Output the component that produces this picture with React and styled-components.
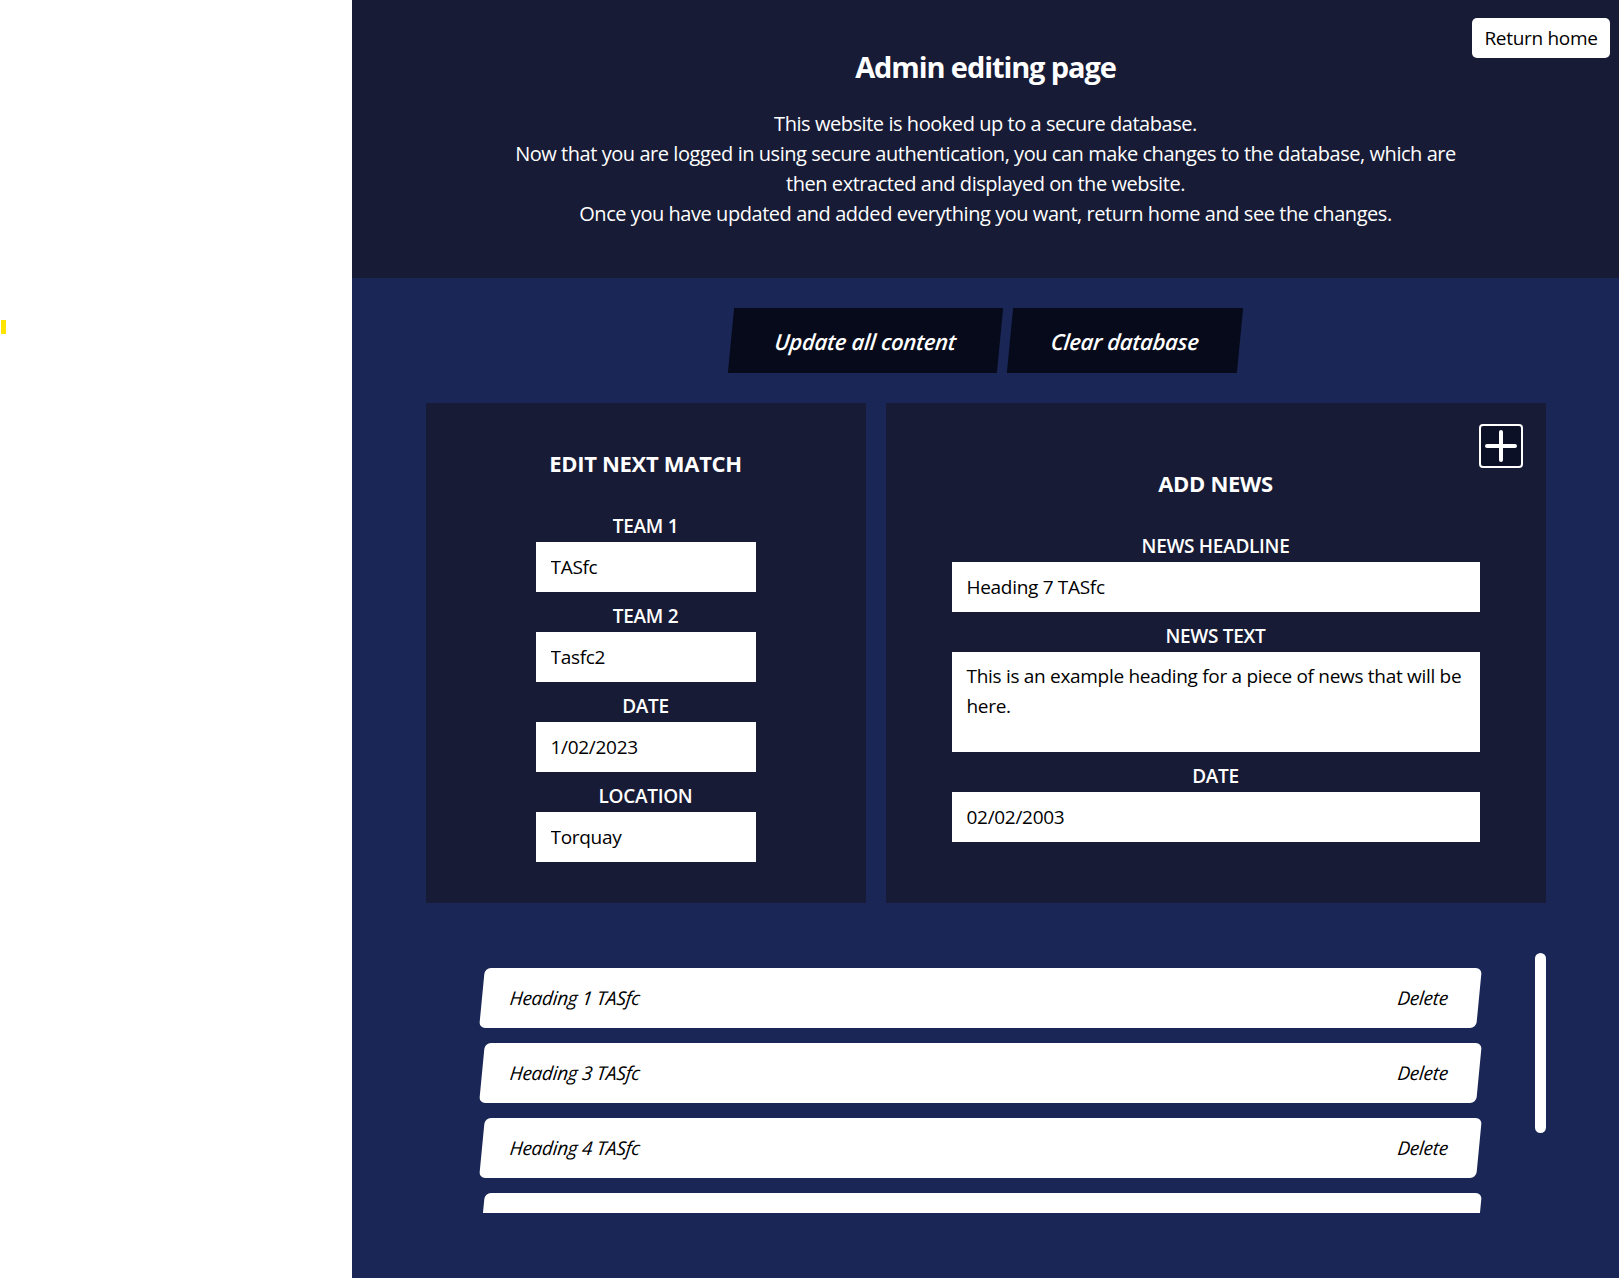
import React from 'react';
import styled, { createGlobalStyle } from 'styled-components';

const GlobalStyle = createGlobalStyle`
  * {
    box-sizing: border-box;
  }
  body {
    margin: 0;
    font-family: 'Open Sans', 'Noto Sans', sans-serif;
    background: #ffffff;
  }
`;

const Page = styled.div`
  display: flex;
  min-height: 100vh;
`;

const Sidebar = styled.aside`
  width: 352px;
  flex-shrink: 0;
  background: #ffffff;
  padding-top: 320px;
`;

const Marker = styled.span`
  display: block;
  width: 5px;
  height: 14px;
  margin-left: 1px;
  background: #ffe500;
`;

const Main = styled.main`
  flex: 1;
  background: #1a2655;
  display: flex;
  flex-direction: column;
  align-items: center;
  padding-bottom: 65px;
`;

const Header = styled.header`
  position: relative;
  width: 100%;
  height: 278px;
  background: #171b35;
  color: #ffffff;
  text-align: center;
  padding-top: 47px;
`;

const Title = styled.h1`
  margin: 0;
  font-size: 29px;
  line-height: 40px;
  font-weight: 700;
  letter-spacing: -1.1px;
`;

const Intro = styled.p`
  margin: 22px auto 0;
  max-width: 960px;
  font-size: 20px;
  line-height: 30px;
  letter-spacing: -0.45px;
`;

const HomeButton = styled.button`
  position: absolute;
  top: 18px;
  right: 9px;
  width: 138px;
  height: 40px;
  background: #ffffff;
  color: #000000;
  border: none;
  border-radius: 5px;
  font-family: inherit;
  font-size: 19px;
  letter-spacing: -0.3px;
  cursor: pointer;
`;

const ActionRow = styled.div`
  display: flex;
  gap: 10px;
  margin-top: 30px;
`;

const ActionButton = styled.button`
  width: ${(p) => p.$w}px;
  height: 65px;
  background: #060a1a;
  color: #ffffff;
  border: none;
  transform: skewX(-5.5deg);
  font-family: inherit;
  font-size: 22px;
  font-weight: 600;
  font-style: italic;
  letter-spacing: -0.3px;
  cursor: pointer;
`;

const PanelRow = styled.div`
  display: flex;
  gap: 20px;
  margin-top: 30px;
`;

const Panel = styled.section`
  position: relative;
  width: ${(p) => p.$w}px;
  height: 500px;
  background: #171b35;
  color: #ffffff;
  display: flex;
  flex-direction: column;
  justify-content: center;
  align-items: center;
  padding-top: 4px;
`;

const PanelTitle = styled.h2`
  margin: 0 0 36px;
  font-size: 22px;
  line-height: 30px;
  font-weight: 700;
  letter-spacing: -0.3px;
`;

const Fields = styled.div`
  display: flex;
  flex-direction: column;
  gap: 12px;
`;

const Field = styled.label`
  display: flex;
  flex-direction: column;
  align-items: center;
  gap: 4px;
`;

const FieldName = styled.span`
  font-size: 19px;
  line-height: 24px;
  font-weight: 600;
  letter-spacing: -0.3px;
`;

const TextInput = styled.input`
  width: ${(p) => p.$w}px;
  height: 50px;
  border: none;
  border-radius: 0;
  padding: 0 15px;
  font-family: inherit;
  font-size: 19px;
  letter-spacing: -0.3px;
  color: #000000;
  background: #ffffff;
  outline: none;
`;

const TextArea = styled.textarea`
  width: ${(p) => p.$w}px;
  height: 100px;
  border: none;
  border-radius: 0;
  padding: 9px 0 0 15px;
  font-family: inherit;
  font-size: 19px;
  line-height: 30px;
  letter-spacing: -0.3px;
  color: #000000;
  background: #ffffff;
  resize: none;
  overflow: hidden;
  outline: none;
`;

const AddButton = styled.button`
  position: absolute;
  top: 21px;
  right: 23px;
  width: 44px;
  height: 44px;
  padding: 0;
  display: flex;
  align-items: center;
  justify-content: center;
  background: #0c1026;
  border: 2px solid #ffffff;
  border-radius: 4px;
  cursor: pointer;
`;

const ListArea = styled.div`
  display: flex;
  width: 1120px;
  height: 260px;
  margin-top: 50px;
`;

const NewsList = styled.div`
  flex: 1;
  padding-top: 15px;
  overflow: hidden;
  display: flex;
  flex-direction: column;
  gap: 15px;
`;

// the list's white scroll thumb
const ScrollTrack = styled.div`
  width: 11px;
  flex-shrink: 0;
`;

const ScrollThumb = styled.div`
  height: 180px;
  background: #ffffff;
  border-radius: 6px;
`;

const NewsItem = styled.div`
  flex-shrink: 0;
  width: 997px;
  height: 60px;
  margin: 0 auto;
  display: flex;
  align-items: center;
  justify-content: space-between;
  padding: 0 31px 0 28px;
  background: #ffffff;
  border-radius: 6px;
  transform: skewX(-5.5deg);
  color: #000000;
  font-size: 19px;
  font-style: italic;
  letter-spacing: -0.3px;
`;

const DeleteLink = styled.span`
  cursor: pointer;
`;

const PlusIcon = () => (
  <svg width="34" height="34" viewBox="0 0 34 34" fill="none">
    <path d="M17 3v28M3 17h28" stroke="#ffffff" strokeWidth="4" strokeLinecap="round" />
  </svg>
);

const news = ['Heading 1 TASfc', 'Heading 3 TASfc', 'Heading 4 TASfc', 'Heading 5 TASfc', 'Heading 6 TASfc'];

export default function App() {
  return (
    <>
      <GlobalStyle />
      <Page>
        <Sidebar>
          <Marker />
        </Sidebar>
        <Main>
          <Header>
            <Title>Admin editing page</Title>
            <Intro>
              This website is hooked up to a secure database.
              <br />
              Now that you are logged in using secure authentication, you can make changes to the database, which are then extracted and displayed on the website.
              <br />
              Once you have updated and added everything you want, return home and see the changes.
            </Intro>
            <HomeButton>Return home</HomeButton>
          </Header>

          <ActionRow>
            <ActionButton $w={269}>Update all content</ActionButton>
            <ActionButton $w={230}>Clear database</ActionButton>
          </ActionRow>

          <PanelRow>
            <Panel $w={440}>
              <PanelTitle>EDIT NEXT MATCH</PanelTitle>
              <Fields>
                <Field>
                  <FieldName>TEAM 1</FieldName>
                  <TextInput $w={220} defaultValue="TASfc" />
                </Field>
                <Field>
                  <FieldName>TEAM 2</FieldName>
                  <TextInput $w={220} defaultValue="Tasfc2" />
                </Field>
                <Field>
                  <FieldName>DATE</FieldName>
                  <TextInput $w={220} defaultValue="1/02/2023" />
                </Field>
                <Field>
                  <FieldName>LOCATION</FieldName>
                  <TextInput $w={220} defaultValue="Torquay" />
                </Field>
              </Fields>
            </Panel>

            <Panel $w={660}>
              <AddButton aria-label="Add news">
                <PlusIcon />
              </AddButton>
              <PanelTitle>ADD NEWS</PanelTitle>
              <Fields>
                <Field>
                  <FieldName>NEWS HEADLINE</FieldName>
                  <TextInput $w={528} defaultValue="Heading 7 TASfc" />
                </Field>
                <Field>
                  <FieldName>NEWS TEXT</FieldName>
                  <TextArea $w={528} defaultValue="This is an example heading for a piece of news that will be here." />
                </Field>
                <Field>
                  <FieldName>DATE</FieldName>
                  <TextInput $w={528} defaultValue="02/02/2003" />
                </Field>
              </Fields>
            </Panel>
          </PanelRow>

          <ListArea>
            <NewsList>
              {news.map((title) => (
                <NewsItem key={title}>
                  <span>{title}</span>
                  <DeleteLink>Delete</DeleteLink>
                </NewsItem>
              ))}
            </NewsList>
            <ScrollTrack>
              <ScrollThumb />
            </ScrollTrack>
          </ListArea>
        </Main>
      </Page>
    </>
  );
}
